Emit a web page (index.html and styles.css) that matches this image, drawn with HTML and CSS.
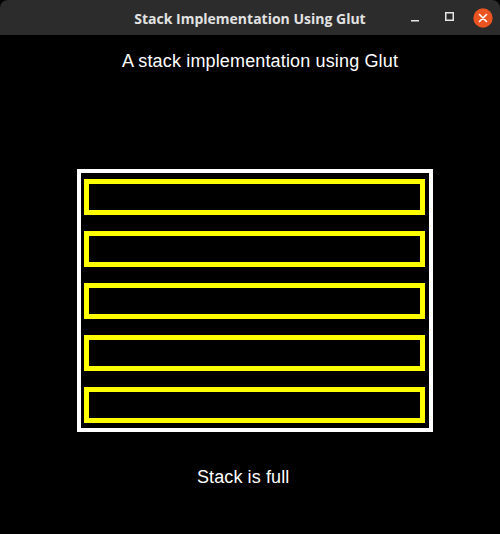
FILE: index.html
```html
<!DOCTYPE html>
<html>
<head>
<meta charset="utf-8">
<link rel="stylesheet" href="styles.css">
</head>
<body>
<div class="window">
  <header class="titlebar">
    <div class="spacer"></div>
    <div class="title">Stack Implementation Using Glut</div>
    <div class="controls">
      <svg class="ctl" width="20" height="20" viewBox="0 0 20 20"><rect x="6" y="12" width="8" height="1.5" fill="#e6e6e6"/></svg>
      <svg class="ctl" width="20" height="20" viewBox="0 0 20 20"><rect x="6.75" y="4.75" width="7.5" height="7.5" fill="none" stroke="#e6e6e6" stroke-width="1.5"/></svg>
      <svg class="ctl close" width="20" height="20" viewBox="0 0 20 20"><circle cx="10" cy="10" r="9.7" fill="#e95420"/><path d="M6.5 6.5 L13.5 13.5 M13.5 6.5 L6.5 13.5" stroke="#fff" stroke-width="1.6" stroke-linecap="round"/></svg>
    </div>
  </header>
  <main class="canvas">
    <p class="heading">A stack implementation using Glut</p>
    <div class="stack">
      <div class="slot"></div>
      <div class="slot"></div>
      <div class="slot"></div>
      <div class="slot"></div>
      <div class="slot"></div>
    </div>
    <p class="status">Stack is full</p>
  </main>
</div>
</body>
</html>
```

FILE: styles.css
```css
html, body {
  margin: 0;
  padding: 0;
  background: #000;
}
.window {
  width: 500px;
  height: 534px;
  background: #000;
  overflow: hidden;
}
.titlebar {
  height: 35px;
  background: #2c2c2c;
  border-radius: 8px 8px 0 0;
  display: grid;
  grid-template-columns: 1fr auto 1fr;
  align-items: center;
}
.title {
  font-family: "Open Sans", "DejaVu Sans", sans-serif;
  font-weight: 700;
  font-size: 14px;
  color: #e2e2e2;
  letter-spacing: 0;
  padding-top: 1px;
}
.controls {
  justify-self: end;
  display: flex;
  align-items: center;
  gap: 14px;
  padding-right: 7px;
  padding-top: 1px;
}
.ctl {
  display: block;
}
.canvas {
  font-family: "Liberation Sans", Arial, sans-serif;
  color: #fff;
  font-size: 18px;
}
.heading {
  margin: 0;
  padding: 15px 0 0 122px;
  line-height: 22px;
  letter-spacing: 0.15px;
}
.stack {
  margin: 97px 0 0 77px;
  width: 341px;
  border: 4px solid #fff;
  padding: 6px 4px 5px 3px;
  display: flex;
  flex-direction: column;
  gap: 16px;
}
.slot {
  height: 26px;
  border: 5px solid #ffff00;
}
.status {
  margin: 0;
  padding: 34px 0 0 197px;
  line-height: 22px;
  letter-spacing: 0.1px;
}
```
